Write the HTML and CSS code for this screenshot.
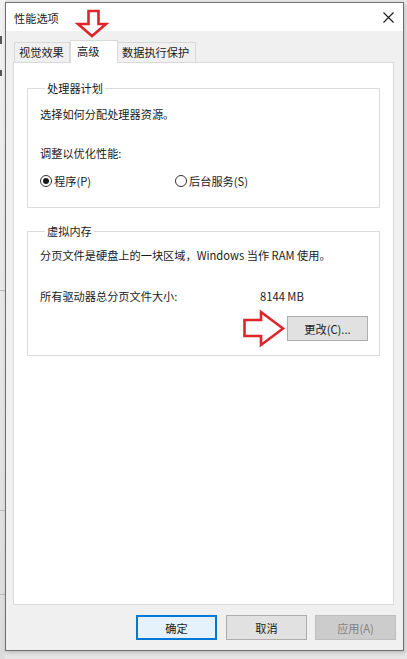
FILE: index.html
```html
<!DOCTYPE html>
<html lang="zh-CN">
<head>
<meta charset="utf-8">
<title>性能选项</title>
<link rel="stylesheet" href="styles.css">
</head>
<body>
<div class="backdrop-left"><span class="bk-mark"></span><span class="bk-mark bk-2"></span><span class="bk-line"></span><span class="bk-line bk-l2"></span><span class="bk-line bk-l3"></span></div>
<div class="dialog">
  <div class="titlebar">
    <span class="title">性能选项</span>
    <svg class="close" width="11" height="11" viewBox="0 0 11 11"><path d="M0.5 0.5 L10.5 10.5 M10.5 0.5 L0.5 10.5" stroke="#1a1a1a" stroke-width="1.1" fill="none"/></svg>
  </div>
  <div class="content">
    <div class="tabs">
      <div class="tab">视觉效果</div>
      <div class="tab active">高级</div>
      <div class="tab">数据执行保护</div>
    </div>
    <div class="panel">
      <fieldset class="group g1">
        <legend>处理器计划</legend>
        <div class="line">选择如何分配处理器资源。</div>
        <div class="line l2">调整以优化性能:</div>
        <div class="radios">
          <label class="radio"><span class="dot checked"></span>程序(P)</label>
          <label class="radio r2"><span class="dot"></span>后台服务(S)</label>
        </div>
      </fieldset>
      <fieldset class="group g2">
        <legend>虚拟内存</legend>
        <div class="line">分页文件是硬盘上的一块区域，Windows 当作 RAM 使用。</div>
        <div class="line size-row"><span class="size-label">所有驱动器总分页文件大小:</span><span>8144 MB</span></div>
        <div class="btn-row"><button class="btn">更改(C)...</button></div>
      </fieldset>
    </div>
    <div class="footer">
      <button class="btn default">确定</button>
      <button class="btn">取消</button>
      <button class="btn disabled">应用(A)</button>
    </div>
  </div>
</div>
<svg class="annot" width="407" height="659" viewBox="0 0 407 659">
  <polygon points="88.5,11 98.5,11 98.5,24 106,24 92,36 78,24 88.5,24" fill="#fff" stroke="#e0242c" stroke-width="2.6" stroke-linejoin="miter"/>
  <polygon points="244.5,320 261,320 261,312 283,328.5 261,345 261,336 244.5,336" fill="#fff" stroke="#e0242c" stroke-width="2.6" stroke-linejoin="miter"/>
</svg>
</body>
</html>
```
FILE: styles.css
```css
* { box-sizing: border-box; }
html, body { margin: 0; padding: 0; }
body {
  width: 407px;
  height: 659px;
  overflow: hidden;
  background: #e6e6e6;
  font-family: "Noto Sans CJK SC", "Microsoft YaHei", sans-serif;
  font-size: 11.2px;
  color: #1a1a1a;
  padding: 2px 3px 0 5px;
  position: relative;
}
.backdrop-left {
  position: absolute;
  left: 0; top: 0;
  width: 5px; height: 659px;
  background: linear-gradient(#f2f2f2, #dcdcdc);
  overflow: hidden;
}
.bk-mark { position: absolute; left: 0; top: 36px; width: 2px; height: 8px; background: #555; }
.bk-2 { top: 70px; height: 6px; }
.bk-line { position: absolute; left: 0; top: 290px; width: 5px; height: 1px; background: #bbb; }
.bk-l2 { top: 510px; }
.bk-l3 { top: 594px; }
.dialog {
  width: 399px;
  height: 649px;
  border: 1px solid #6f6f6f;
  background: #f0f0f0;
  display: flex;
  flex-direction: column;
  box-shadow: 1px 2px 4px rgba(0,0,0,0.18);
  position: relative;
}
.titlebar {
  height: 28px;
  background: #fff;
  display: flex;
  align-items: center;
  justify-content: space-between;
  padding: 0 9px 0 8px;
}
.title { font-size: 11.2px; line-height: 16px; margin-top: 1px; }
.close { display: block; }
.content {
  flex: 1;
  display: flex;
  flex-direction: column;
  padding: 9px 9px 0 7px;
}
.tabs {
  display: flex;
  align-items: flex-end;
  height: 23px;
  margin-bottom: -1px;
  padding-left: 1px;
  position: relative;
  z-index: 1;
}
.tab {
  height: 20px;
  border: 1px solid #d9d9d9;
  border-bottom: none;
  background: #f0f0f0;
  line-height: 18px;
  padding: 0 4px;
  margin-bottom: 1px;
  white-space: nowrap;
  flex: none;
}
.tab + .tab { border-left: none; }
.tab:first-child { width: 56px; }
.tab.active {
  width: 48px;
  height: 23px;
  background: #fff;
  border-left: 1px solid #d9d9d9;
  line-height: 20px;
  padding-left: 6px;
  margin-bottom: 0;
}
.tab:last-child { width: 78px; padding-left: 4px; }
.panel {
  height: 543px;
  background: #fff;
  border: 1px solid #d9d9d9;
  padding: 18px 13px 0 13px;
}
.group {
  margin: 0;
  border: 1px solid #dcdcdc;
  padding: 11px 12px 18px 12px;
  min-width: 0;
}
.group legend {
  padding: 0 2px;
  margin-left: 5px;
  line-height: 14px;
  font-size: 11.2px;
}
.line { line-height: 16px; white-space: nowrap; }
.g1 .l2 { margin-top: 23px; }
.radios { display: flex; margin-top: 12px; line-height: 16px; }
.radio { display: flex; align-items: center; }
.radio.r2 { margin-left: 84px; }
.dot {
  width: 12px; height: 12px;
  border: 1px solid #333;
  border-radius: 50%;
  margin-right: 2px;
  position: relative;
  background: #fff;
}
.dot.checked::after {
  content: "";
  position: absolute;
  left: 2px; top: 2px;
  width: 6px; height: 6px;
  border-radius: 50%;
  background: #1a1a1a;
}
.g2 { margin-top: 16px; padding: 9px 11px 14px 12px; }
.size-row { margin-top: 25px; display: flex; }
.size-label { width: 220px; }
.btn-row { display: flex; justify-content: flex-end; margin-top: 12px; }
.btn {
  font-family: inherit;
  font-size: 11.2px;
  color: #1a1a1a;
  width: 81px;
  height: 25px;
  border: 1px solid #adadad;
  background: #e1e1e1;
  padding: 0;
  line-height: 16px;
}
.footer {
  display: flex;
  justify-content: flex-end;
  margin-top: 10px;
  margin-right: -2px;
  gap: 9px;
}
.footer .btn:last-child { margin-left: -1px; }
.btn.default { border: 2px solid #0078d7; background: #e5f1fb; }
.btn.disabled { background: #cccccc; border-color: #bfbfbf; color: #838383; }
.annot { position: absolute; left: 0; top: 0; pointer-events: none; }
```
